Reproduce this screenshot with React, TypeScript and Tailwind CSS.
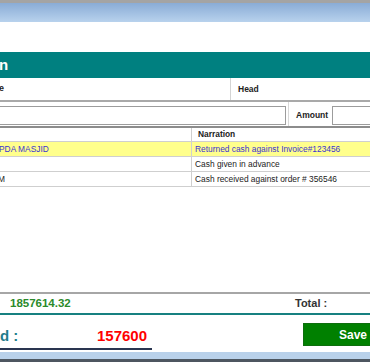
import React from "react"

type Row = { name: string; narration: string; highlight?: boolean }

const rows: Row[] = [
  { name: "PDA MASJID", narration: "Returned cash against Invoice#123456", highlight: true },
  { name: "", narration: "Cash given in advance" },
  { name: "M", narration: "Cash received against order # 356546" },
]

export default function App() {
  return (
    <div className="flex h-[362px] w-[370px] flex-col overflow-hidden bg-white font-['Liberation_Sans',Arial,sans-serif] text-[#222]">
      {/* window chrome */}
      <div className="h-[3px] bg-[#a4a4a4]" />
      <div className="h-[19px] bg-linear-to-b from-[#8aacd6] to-[#b8d2ed]" />
      <div className="h-[30px]" />

      {/* title bar */}
      <div className="flex h-[26px] items-center bg-[#008080]">
        <span className="-ml-[1px] text-[15px] font-bold text-white">n</span>
      </div>

      {/* column captions */}
      <div className="flex h-[22px] items-center">
        <div className="flex h-full w-[231px] shrink-0 items-center border-r border-[#d4d4d4]">
          <span className="-ml-[1px] text-[9px] font-bold">e</span>
        </div>
        <span className="pl-[7px] text-[8.5px] font-bold">Head</span>
      </div>
      <div className="h-[2px] bg-[#a9a9a9]" />

      {/* inputs */}
      <div className="flex h-[24px] items-stretch">
        <div className="flex w-[289px] shrink-0 items-center border-r border-[#d8d8d8] pt-[4px] pb-[1px]">
          <div className="-ml-[1px] h-[19px] w-[287px] border border-[#9c9c9c] bg-white" />
        </div>
        <div className="flex items-center pt-[4px] pb-[1px]">
          <span className="pl-[7px] text-[8.5px] font-bold">Amount</span>
          <div className="ml-[4px] h-[19px] w-[60px] shrink-0 border border-[#9c9c9c] bg-white" />
        </div>
      </div>
      <div className="h-[2px] bg-[#8c8c8c]" />

      {/* grid */}
      <div className="flex flex-col text-[8.4px]">
        <div className="flex h-[14px] items-center border-b border-[#cfcfcf]">
          <div className="h-full w-[192px] shrink-0 border-r border-[#cfcfcf]" />
          <span className="pl-[6px] font-bold">Narration</span>
        </div>
        {rows.map((r) => (
          <div
            key={r.narration}
            className={
              r.highlight
                ? "flex h-[15px] items-center border-b border-[#cfcfcf] bg-[#ffff8c] text-[#3a35d0]"
                : "flex h-[15px] items-center border-b border-[#cfcfcf] bg-white text-[#222]"
            }
          >
            <div className="flex h-full w-[192px] shrink-0 items-center border-r border-[#cfcfcf]">
              <span className={r.name === "M" ? "-ml-[2px]" : "-ml-[1px]"}>{r.name}</span>
            </div>
            <span className="pl-[3px] whitespace-nowrap">{r.narration}</span>
          </div>
        ))}
      </div>
      <div className="h-[105px]" />

      {/* totals */}
      <div className="h-[2px] bg-[#a6a6a6]" />
      <div className="flex h-[19px] items-center">
        <span className="w-[295px] shrink-0 pl-[10px] text-[11.5px] font-bold text-[#2b8a2b]">1857614.32</span>
        <span className="text-[11px] font-bold text-[#333]">Total :</span>
      </div>
      <div className="h-[2px] bg-[#168080]" />

      <div className="flex h-[37px]">
        <div className="flex w-[303px] shrink-0 flex-col pt-[12px]">
          <div className="flex h-[18px] items-center text-[15px] font-bold">
            <span className="w-[97px] text-[#1f7d8c]">d :</span>
            <span className="text-[#ff0000]">157600</span>
          </div>
          <div className="mt-[3px] h-[2px] w-[152px] bg-[#2a3550]" />
        </div>
        <div className="shrink-0 pt-[8px]">
          <button className="flex h-[23px] w-[80px] items-center border border-[#0d6e0d] bg-[#008000] pl-[35px] text-[12px] font-bold text-white">
            Save
          </button>
        </div>
      </div>

      <div className="h-[7px] bg-[#b9d1ea]" />
      <div className="h-[3px] bg-[#4d5660]" />
    </div>
  )
}
